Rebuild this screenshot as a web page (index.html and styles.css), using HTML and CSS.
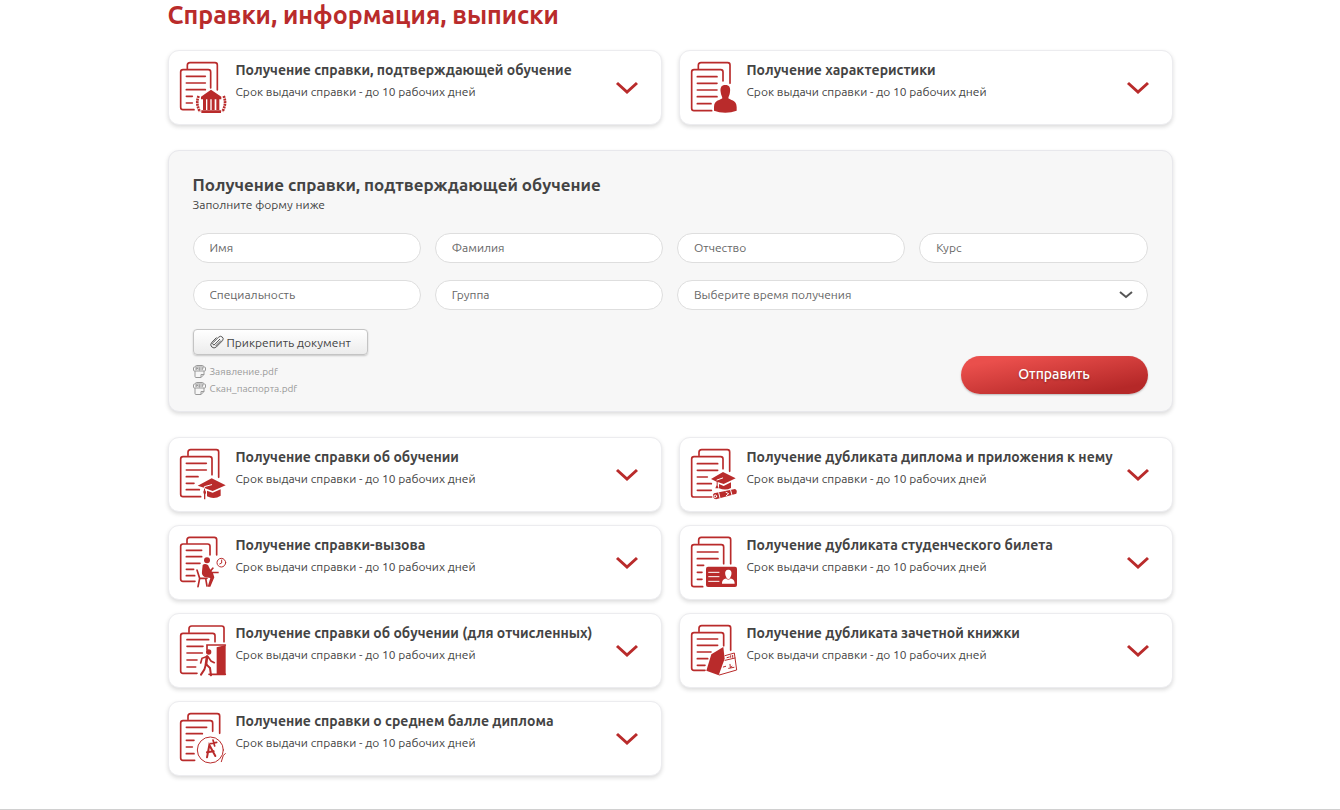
FILE: index.html
```html
<!DOCTYPE html>
<html lang="ru">
<head>
    <meta charset="UTF-8">
    <meta name="viewport" content="width=device-width, initial-scale=1.0">
    <title>Справки, информация, выписки</title>
    <link rel="stylesheet" href="styles.css">
</head>
<body>
    <main class="container">
        <h1>Справки, информация, выписки</h1>

        <div class="cards">
            <article class="card">
                <svg class="card-icon" viewBox="21 18 150 165" aria-hidden="true">
                    <path d="M66 167H33q-7 0-7-7V54q0-7 7-7H109q7 0 7 7V102M46 44V34q0-8 8-8H129q7 0 7 7V108"/>
                    <path d="M43 67H100M43 87H100M43 107H100M43 127H61M43 147H61"/>
                    <path class="fill" d="M117 107L148 128V136H87V128ZM93 136H102V168H93ZM106 136H115V168H106ZM119 136H128V168H119ZM133 136H142V168H133ZM88 169H147V177H88Z"/>
                    <path class="leaf" d="M80 126Q70 148 84 173M155 126Q165 148 151 173"/>
                </svg>
                <div class="card-text">
                    <h2>Получение справки, подтверждающей обучение</h2>
                    <p>Срок выдачи справки - до 10 рабочих дней</p>
                </div>
                <button type="button" class="toggle" aria-label="Развернуть">
                    <svg viewBox="0 0 24 14" aria-hidden="true"><path d="M2 2l10 9 10-9"/></svg>
                </button>
            </article>
            <article class="card">
                <svg class="card-icon" viewBox="21 18 150 165" aria-hidden="true">
                    <path d="M86 170H33q-7 0-7-7V54q0-7 7-7H113q7 0 7 7V81M46 44V34q0-8 8-8H134q7 0 7 7V88"/>
                    <path d="M43 68H102M43 88H102M43 108H102M43 128H102M43 149H84"/>
                    <path class="fill" d="M127 93C139 93 143 101 141 114C140 124 136 128 136 133C140 138 161 138 161 159V170Q145 176 127 176Q108 176 93 170V159C93 138 114 138 118 133C118 128 114 124 113 114C111 101 115 93 127 93Z"/>
                </svg>
                <div class="card-text">
                    <h2>Получение характеристики</h2>
                    <p>Срок выдачи справки - до 10 рабочих дней</p>
                </div>
                <button type="button" class="toggle" aria-label="Развернуть">
                    <svg viewBox="0 0 24 14" aria-hidden="true"><path d="M2 2l10 9 10-9"/></svg>
                </button>
            </article>
        </div>

        <form class="request-form" action="#" method="post">
            <h2>Получение справки, подтверждающей обучение</h2>
            <p>Заполните форму ниже</p>
            <div class="fields">
                <input type="text" name="name" placeholder="Имя" aria-label="Имя">
                <input type="text" name="surname" placeholder="Фамилия" aria-label="Фамилия">
                <input type="text" name="patronymic" placeholder="Отчество" aria-label="Отчество">
                <input type="text" name="course" placeholder="Курс" aria-label="Курс">
                <input type="text" name="speciality" placeholder="Специальность" aria-label="Специальность">
                <input type="text" name="group" placeholder="Группа" aria-label="Группа">
                <div class="select-wrap">
                    <select name="time" aria-label="Время получения">
                        <option>Выберите время получения</option>
                    </select>
                    <svg viewBox="0 0 14 8" aria-hidden="true"><path d="M1 1l6 5 6-5"/></svg>
                </div>
            </div>
            <div class="form-bottom">
                <div class="attachments">
                    <button type="button" class="attach">
                        <svg viewBox="0 0 14 14" aria-hidden="true"><path d="M10 4L5 9.200q-1 1.300-2 .3t.2-2L8.500 2.200q2-1.800 3.800-.2t.2 3.700L6.300 12q-2.300 2-4.500 0t-.2-4.400L6.500 2.500M11 5.500L5.600 11"/></svg>
                        Прикрепить документ
                    </button>
                    <ul class="files">
                        <li>
                            <svg viewBox="0 0 13 13" aria-hidden="true"><path d="M2.500 1.500q0-1 1-1h6q1 0 1 1M1.500 2h10q1 0 1 1v2q0 1-1 1h-10q-1 0-1-1V3q0-1 1-1zM2 6v5.500q0 1 1 1h5l3-3V6M8 12.500V9.500h3M3 5V3h1.500v1H3M6 3v2h1V3zM9 5V3h1.500M9 4h1"/></svg>
                            Заявление.pdf
                        </li>
                        <li>
                            <svg viewBox="0 0 13 13" aria-hidden="true"><path d="M2.500 1.500q0-1 1-1h6q1 0 1 1M1.500 2h10q1 0 1 1v2q0 1-1 1h-10q-1 0-1-1V3q0-1 1-1zM2 6v5.500q0 1 1 1h5l3-3V6M8 12.500V9.500h3M3 5V3h1.500v1H3M6 3v2h1V3zM9 5V3h1.500M9 4h1"/></svg>
                            Скан_паспорта.pdf
                        </li>
                    </ul>
                </div>
                <button type="submit" class="submit">Отправить</button>
            </div>
        </form>

        <div class="cards">
            <article class="card">
                <svg class="card-icon" viewBox="21 21 150 165" aria-hidden="true">
                    <path d="M86 170H33q-7 0-7-7V57q0-7 7-7H113q7 0 7 7V104M48 46V37q0-8 8-8H133q7 0 7 7V112"/>
                    <path d="M43 70H103M43 90H103M43 110H78M43 130H66M43 149H82"/>
                    <path class="fill" d="M119 115L161 136L122 153L99 145V150Q105 157 100 163V178H96V163Q91 157 96 150V143L77 137ZM105 152L122 158L146 148V167Q127 180 105 169Z"/>
                    <path class="cut" d="M97 145V140L119 134"/>
                </svg>
                <div class="card-text">
                    <h2>Получение справки об обучении</h2>
                    <p>Срок выдачи справки - до 10 рабочих дней</p>
                </div>
                <button type="button" class="toggle" aria-label="Развернуть">
                    <svg viewBox="0 0 24 14" aria-hidden="true"><path d="M2 2l10 9 10-9"/></svg>
                </button>
            </article>
            <article class="card">
                <svg class="card-icon" viewBox="21 21 150 165" aria-hidden="true">
                    <path d="M86 171H33q-7 0-7-7V57q0-7 7-7H113q7 0 7 7V86M48 46V37q0-8 8-8H133q7 0 7 7V94"/>
                    <path d="M43 71H104M43 91H104M43 111H73M43 131H85M43 151H85"/>
                    <path class="fill" d="M120 96L158 115L122 132L104 126V137L107 145H97L101 135V125L84 117ZM108 132L122 138L144 127V144Q128 153 108 145Z"/>
                    <path class="fill" d="M93 160L156 147Q164 150 160 161L99 178Q88 176 91 163Z"/>
                    <path class="cut" d="M102 120L119 114M107 158L111 174M143 151L147 165M129 157L137 161L130 167"/>
                    <circle class="cut" cx="97" cy="169" r="4"/>
                </svg>
                <div class="card-text">
                    <h2>Получение дубликата диплома и приложения к нему</h2>
                    <p>Срок выдачи справки - до 10 рабочих дней</p>
                </div>
                <button type="button" class="toggle" aria-label="Развернуть">
                    <svg viewBox="0 0 24 14" aria-hidden="true"><path d="M2 2l10 9 10-9"/></svg>
                </button>
            </article>
            <article class="card">
                <svg class="card-icon" viewBox="21 15 150 165" aria-hidden="true">
                    <path d="M69 154H33q-7 0-7-7V49q0-7 7-7H107q7 0 7 7V75M45 39V30q0-8 8-8H127q7 0 7 7V75"/>
                    <path d="M43 61H89M43 80H89M43 100H84M43 118H65M43 137H68"/>
                    <circle class="fill" cx="105" cy="91" r="9"/>
                    <path class="fill" d="M92 105Q98 99 108 105L115 119L122 112L126 114L117 125H140V130H123L127 142L115 170H107L115 144L98 141Q88 137 90 124Z"/>
                    <path d="M75 120L83 145H105M83 145L78 170M101 145L105 168M96 111L107 126H118"/>
                    <circle cx="148" cy="98" r="13" stroke-width="3"/>
                    <path stroke-width="3" d="M149 90V99L143 102"/>
                </svg>
                <div class="card-text">
                    <h2>Получение справки-вызова</h2>
                    <p>Срок выдачи справки - до 10 рабочих дней</p>
                </div>
                <button type="button" class="toggle" aria-label="Развернуть">
                    <svg viewBox="0 0 24 14" aria-hidden="true"><path d="M2 2l10 9 10-9"/></svg>
                </button>
            </article>
            <article class="card">
                <svg class="card-icon" viewBox="21 15 150 165" aria-hidden="true">
                    <path d="M59 170H33q-7 0-7-7V51q0-7 7-7H115q7 0 7 7V101M47 40V30q0-8 8-8H136q7 0 7 7V101"/>
                    <path d="M43 66H105M43 86H105M43 106H62M43 127H57M43 148H57"/>
                    <rect class="fill" x="69" y="110" width="93" height="61" rx="6"/>
                    <path class="cut" d="M77 127H108M77 140H108M77 154H108"/>
                    <path class="white" d="M136 119C144 119 147 125 145 134C144 139 141 142 141 145C146 147 155 147 155 161H117C117 147 126 147 131 145C131 142 128 139 127 134C125 125 128 119 136 119Z"/>
                    <path stroke-width="2" d="M130 146Q136 152 142 146"/>
                </svg>
                <div class="card-text">
                    <h2>Получение дубликата студенческого билета</h2>
                    <p>Срок выдачи справки - до 10 рабочих дней</p>
                </div>
                <button type="button" class="toggle" aria-label="Развернуть">
                    <svg viewBox="0 0 24 14" aria-hidden="true"><path d="M2 2l10 9 10-9"/></svg>
                </button>
            </article>
            <article class="card">
                <svg class="card-icon" viewBox="21 21 150 165" aria-hidden="true">
                    <path d="M75 172H33q-7 0-7-7V59q0-7 7-7H122q7 0 7 7V77M51 48V38q0-8 8-8H149q7 0 7 7V77"/>
                    <path d="M45 71H110M45 91H93M45 111H91M45 132H75M45 153H71"/>
                    <path class="fill" d="M134 94L161 87V177L134 175Z"/>
                    <path d="M105 101V87H160M111 175H160"/>
                    <circle class="fill" cx="110" cy="108" r="8"/>
                    <path stroke-width="5" d="M107 121L90 127L86 141M108 122L117 135L127 140"/>
                    <path stroke-width="8" d="M105 122L102 145"/>
                    <path stroke-width="6" d="M102 144L97 161L87 176M103 145L114 156L117 178"/>
                </svg>
                <div class="card-text">
                    <h2>Получение справки об обучении (для отчисленных)</h2>
                    <p>Срок выдачи справки - до 10 рабочих дней</p>
                </div>
                <button type="button" class="toggle" aria-label="Развернуть">
                    <svg viewBox="0 0 24 14" aria-hidden="true"><path d="M2 2l10 9 10-9"/></svg>
                </button>
            </article>
            <article class="card">
                <svg class="card-icon" viewBox="21 21 150 165" aria-hidden="true">
                    <path d="M66 163H33q-7 0-7-7V57q0-7 7-7H115q7 0 7 7V89M48 46V37q0-8 8-8H136q7 0 7 7V103"/>
                    <path d="M43 69H104M43 88H104M43 108H84M43 128H74M43 148H66"/>
                    <path class="fill" d="M85 115L121 93L125 128L107 178L70 164Z"/>
                    <path stroke-width="3" d="M126 119L154 111L161 162L109 177M126 133L156 126M132 125L139 123M143 119V124M149 118V124M121 153L128 151M141 145L142 155L147 151M137 157L153 154"/>
                </svg>
                <div class="card-text">
                    <h2>Получение дубликата зачетной книжки</h2>
                    <p>Срок выдачи справки - до 10 рабочих дней</p>
                </div>
                <button type="button" class="toggle" aria-label="Развернуть">
                    <svg viewBox="0 0 24 14" aria-hidden="true"><path d="M2 2l10 9 10-9"/></svg>
                </button>
            </article>
            <article class="card">
                <svg class="card-icon" viewBox="21 21 150 165" aria-hidden="true">
                    <path d="M68 169H33q-7 0-7-7V57q0-7 7-7H115q7 0 7 7V82M48 46V37q0-8 8-8H136q7 0 7 7V88"/>
                    <path d="M43 70H104M43 89H91M43 109H66M43 129H61M43 149H66"/>
                    <circle cx="115" cy="138" r="39" stroke-width="3"/>
                    <path stroke-width="6" d="M105 160L112 123L130 156M105 145L125 142"/>
                    <path stroke-width="5" d="M116 119L134 115M123 108L128 126"/>
                    <path stroke-width="3" d="M148 173L154 154L160 149"/>
                </svg>
                <div class="card-text">
                    <h2>Получение справки о среднем балле диплома</h2>
                    <p>Срок выдачи справки - до 10 рабочих дней</p>
                </div>
                <button type="button" class="toggle" aria-label="Развернуть">
                    <svg viewBox="0 0 24 14" aria-hidden="true"><path d="M2 2l10 9 10-9"/></svg>
                </button>
            </article>
        </div>
    </main>
    <footer></footer>
</body>
</html>
```
FILE: styles.css
```css
* {
    box-sizing: border-box;
}

body {
    margin: 0;
    font-family: Ubuntu, "Noto Sans", sans-serif;
    font-size: 12px;
    color: #444;
    background-color: #fff;
}

h1, h2, p, ul {
    margin: 0;
    padding: 0;
}

.container {
    width: 75%;
    margin: 0 auto;
    padding-bottom: 33px;
}

h1 {
    margin-bottom: 20px;
    font-size: 25px;
    line-height: 30px;
    color: #b92b2b;
}

.cards {
    display: grid;
    grid-template-columns: 1fr 1fr;
    gap: 13px 17px;
}

.card {
    display: flex;
    min-height: 75px;
    padding: 9px 22px 9px 10px;
    background-color: #fff;
    border: 1px solid #ececef;
    border-radius: 11px;
    box-shadow: 0 2px 4px rgba(0, 0, 0, 0.14);
}

.card-icon {
    flex: none;
    width: 50px;
    height: 55px;
    margin-right: 7px;
    fill: none;
    stroke: #b92b2b;
    stroke-width: 5;
    stroke-linecap: round;
}

.card-icon .fill {
    fill: #b92b2b;
    stroke: none;
}

.card-icon .white {
    fill: #fff;
    stroke: none;
}

.card-icon .cut {
    stroke: #fff;
    stroke-width: 3;
}

.card-icon .leaf {
    stroke-width: 8;
    stroke-linecap: butt;
    stroke-dasharray: 6 2;
}

.card-text {
    flex: 1;
}

.card h2 {
    font-size: 14px;
    line-height: 20px;
}

.card p {
    line-height: 24px;
}

.toggle {
    align-self: center;
    padding: 0;
    border: none;
    background: none;
    cursor: pointer;
}

.toggle svg {
    display: block;
    width: 24px;
    height: 14px;
    fill: none;
    stroke: #b92b2b;
    stroke-width: 3;
}

.request-form {
    margin: 25px 0;
    padding: 23px 24px 14px;
    background-color: #f7f7f7;
    border: 1px solid #e8e8ec;
    border-radius: 11px;
    box-shadow: 0 2px 4px rgba(0, 0, 0, 0.14);
}

.request-form h2 {
    font-size: 17px;
    line-height: 22px;
}

.request-form p {
    line-height: 18px;
}

.fields {
    display: grid;
    grid-template-columns: repeat(4, 1fr);
    gap: 17px 14px;
    margin: 19px 0;
}

.fields input,
.fields select {
    width: 100%;
    height: 30px;
    padding: 0 16px 2px;
    border: 1px solid #dedede;
    border-radius: 15px;
    background-color: #fff;
    color: #666;
    font-family: inherit;
    font-size: 12px;
}

.fields input::placeholder {
    color: #666;
    opacity: 1;
}

.fields select {
    appearance: none;
}

.select-wrap {
    position: relative;
    grid-column: span 2;
}

.select-wrap svg {
    position: absolute;
    top: 11px;
    right: 15px;
    width: 14px;
    height: 8px;
    fill: none;
    stroke: #555;
    stroke-width: 2;
    pointer-events: none;
}

.form-bottom {
    display: flex;
    justify-content: space-between;
    align-items: flex-end;
}

.attach {
    display: flex;
    align-items: center;
    gap: 3px;
    height: 26px;
    padding: 0 16px;
    border: 1px solid #c4c4c4;
    border-radius: 4px;
    background: linear-gradient(#fff, #ececec);
    box-shadow: 0 1px 2px rgba(0, 0, 0, 0.2);
    color: #444;
    font-family: inherit;
    font-size: 12px;
    cursor: pointer;
}

.attach svg {
    width: 14px;
    height: 14px;
    fill: none;
    stroke: #555;
}

.files {
    margin-top: 8px;
    list-style: none;
    font-size: 10px;
    line-height: 17px;
    color: #999;
}

.files li {
    display: flex;
    align-items: center;
    gap: 4px;
}

.files svg {
    width: 13px;
    height: 13px;
    fill: none;
    stroke: #999;
}

.submit {
    width: 187px;
    height: 38px;
    margin-bottom: 3px;
    padding-bottom: 3px;
    border: none;
    border-radius: 19px;
    background: linear-gradient(170deg, #ea4f4c 15%, #b52828 85%);
    box-shadow: 0 1px 2px rgba(0, 0, 0, 0.25);
    color: #fff;
    font-family: inherit;
    font-size: 14px;
    font-weight: 500;
    text-shadow: 0 1px 2px rgba(0, 0, 0, 0.3);
    cursor: pointer;
}

footer {
    border-top: 1px solid #d0d0d0;
}
```
